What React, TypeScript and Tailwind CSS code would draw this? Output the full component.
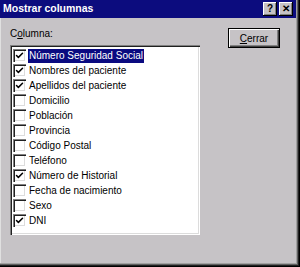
import { Check } from "lucide-react";

const COLUMNS = [
  { label: "Número Seguridad Social", checked: true },
  { label: "Nombres del paciente", checked: true },
  { label: "Apellidos del paciente", checked: true },
  { label: "Domicilio", checked: false },
  { label: "Población", checked: false },
  { label: "Provincia", checked: false },
  { label: "Código Postal", checked: false },
  { label: "Teléfono", checked: false },
  { label: "Número de Historial", checked: true },
  { label: "Fecha de nacimiento", checked: false },
  { label: "Sexo", checked: false },
  { label: "DNI", checked: true },
];

function CheckBox({ checked }: { checked: boolean }) {
  return (
    <span className="w-[13px] h-[13px] shrink-0 bg-white flex items-center justify-center shadow-[inset_1px_1px_0_#808080,inset_2px_2px_0_#202020,inset_-1px_-1px_0_#ffffff,inset_-2px_-2px_0_#dcdcdc]">
      {checked && <Check size={9} strokeWidth={4} className="text-black" />}
    </span>
  );
}

function TitleButton({ children }: { children: React.ReactNode }) {
  return (
    <span className="w-[14px] h-[14px] bg-[#c6c3c6] flex items-center justify-center text-[10px] font-bold leading-none text-black shadow-[inset_-1px_-1px_0_#000,inset_1px_1px_0_#fff,inset_-2px_-2px_0_#808080]">
      {children}
    </span>
  );
}

export default function App() {
  return (
    <div
      className="w-[300px] h-[267px] bg-[#c6c3c6] flex flex-col shadow-[inset_-1px_-1px_0_#000,inset_-2px_-2px_0_#202020,inset_-3px_-3px_0_#606060,inset_-4px_-4px_0_#a0a0a0,inset_1px_1px_0_#e0e0e0]"
      style={{ fontFamily: '"Liberation Sans", Arial, sans-serif' }}
    >
      {/* Barra de título */}
      <div className="h-[18px] mr-[4px] bg-[#0c0c7e] flex items-center justify-between pl-[3px] pr-[3px]">
        <span className="text-white text-[10.5px] font-bold">Mostrar columnas</span>
        <div className="flex gap-[2px]">
          <TitleButton>?</TitleButton>
          <TitleButton>✕</TitleButton>
        </div>
      </div>

      <div className="flex pl-[10px]">
        <div className="flex flex-col">
          <div className="text-[10px] text-black mt-[10px] h-[17px] leading-[12px]">
            C<span className="underline">o</span>lumna:
          </div>
          <div className="w-[190px] h-[190px] bg-white pt-[3px] pl-[3px] shadow-[inset_1px_1px_0_#808080,inset_2px_2px_0_#202020,inset_-1px_-1px_0_#ffffff,inset_-2px_-2px_0_#dcdcdc]">
            {COLUMNS.map((col, i) => (
              <div key={col.label} className="h-[15px] flex items-center gap-[2px]">
                <CheckBox checked={col.checked} />
                <span
                  className={
                    i === 0
                      ? "text-[10px] leading-[14px] px-[1px] bg-[#0a0a80] text-white"
                      : "text-[10px] leading-[14px] px-[1px] text-black"
                  }
                >
                  {col.label}
                </span>
              </div>
            ))}
          </div>
        </div>

        <div className="ml-[28px] mt-[10px]">
          <div className="w-[52px] h-[20px] flex items-center justify-center text-[10px] text-black shadow-[inset_1px_1px_0_#000,inset_-1px_-1px_0_#000,inset_2px_2px_0_#fff,inset_-2px_-2px_0_#404040,inset_-3px_-3px_0_#808080]">
            <span className="underline">C</span>errar
          </div>
        </div>
      </div>
    </div>
  );
}
